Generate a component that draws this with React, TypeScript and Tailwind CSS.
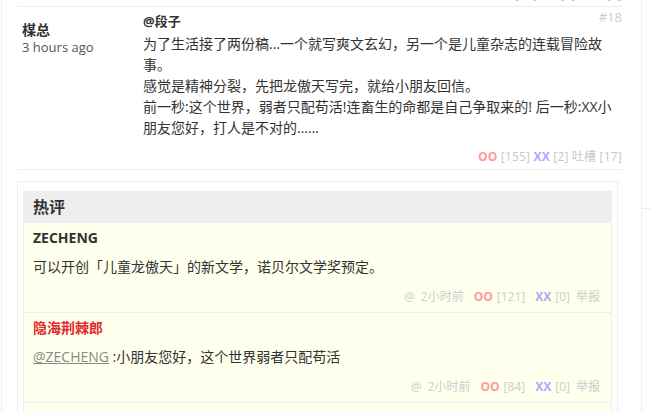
import React from "react";

interface HotComment {
  author: string;
  authorColor: string;
  mention?: string;
  text: string;
  time: string;
  oo: number;
  xx: number;
}

const hotComments: HotComment[] = [
  {
    author: "ZECHENG",
    authorColor: "text-[#333]",
    text: "可以开创「儿童龙傲天」的新文学，诺贝尔文学奖预定。",
    time: "2小时前",
    oo: 121,
    xx: 0,
  },
  {
    author: "隐海荆棘郎",
    authorColor: "text-[#e02c2c]",
    mention: "@ZECHENG",
    text: " :小朋友您好，这个世界弱者只配苟活",
    time: "2小时前",
    oo: 84,
    xx: 0,
  },
  {
    author: "",
    authorColor: "text-[#333]",
    text: "",
    time: "",
    oo: 0,
    xx: 0,
  },
];

const VoteLine = ({ oo, xx, tucao }: { oo: number; xx: number; tucao: number }) => (
  <div className="text-right text-[12px] leading-[18px] tracking-[0.2px] text-[#c8c8c8]">
    <span className="font-bold text-[#ff9a9a]">OO</span> [{oo}]{" "}
    <span className="font-bold text-[#a9a9ff]">XX</span> [{xx}] 吐槽 [{tucao}]
  </div>
);

export default function App() {
  return (
    <div
      className="w-[651px] h-[412px] overflow-hidden bg-white flex text-[#333]"
      style={{ fontFamily: '"Open Sans", "Noto Sans CJK SC", sans-serif' }}
    >
      {/* main column */}
      <div className="ml-px w-[641px] shrink-0 border-x border-[#eee] pl-[15px] pr-[18px]">
        {/* previous comment, cut off */}
        <div className="-mt-[14px] pb-[2px] border-b border-[#eee] pr-[1px]">
          <VoteLine oo={42} xx={3} tucao={6} />
        </div>

        {/* comment #18 */}
        <div className="relative flex border-b border-[#eee] pl-[5px] pb-[3px]">
          <div className="w-[121px] shrink-0 pt-[14px]">
            <div className="text-[14px] font-bold leading-[18px]">楳总</div>
            <div className="text-[13px] leading-[16px] text-[#555]">3 hours ago</div>
          </div>
          <div className="flex-1 pt-[5px] pr-[1px]">
            <div className="text-[13px] font-bold leading-[18px]">@段子</div>
            <div className="mt-[3px] text-[14px] leading-[21px] whitespace-nowrap">
              为了生活接了两份稿...一个就写爽文玄幻，另一个是儿童杂志的连载冒险故
              <br />
              事。
              <br />
              感觉是精神分裂，先把龙傲天写完，就给小朋友回信。
              <br />
              前一秒:这个世界，弱者只配苟活!连畜生的命都是自己争取来的! 后一秒:XX小
              <br />
              朋友您好，打人是不对的……
            </div>
            <div className="mt-[10px]">
              <VoteLine oo={155} xx={2} tucao={17} />
            </div>
          </div>
          <div className="absolute top-[2px] right-[1px] text-[13px] leading-[16px] text-[#ccc]">
            #18
          </div>
        </div>

        {/* hot comments */}
        <div className="mt-[11px] mr-[5px] border border-[#eee] pt-[9px] px-[5px]">
          <div className="h-[32px] bg-[#eee] pl-[10px] flex items-center text-[16px] font-bold text-[#333]">
            热评
          </div>
          {hotComments.map((c, i) => (
            <div
              key={i}
              className="bg-[#ffffee] border-x border-b border-[#eee] pl-[9px] pr-[11px] pt-[6px] pb-[6px]"
            >
              <div className={`text-[14px] font-bold leading-[18px] h-[18px] ${c.authorColor}`}>
                {c.author}
              </div>
              <div className="mt-[10px] text-[14px] leading-[20px] h-[20px]">
                {c.mention && (
                  <span className="text-[#888] underline underline-offset-1">{c.mention}</span>
                )}
                {c.text}
              </div>
              <div className="mt-[11px] h-[18px] flex justify-end items-center text-[12px] leading-[18px] text-[#ccc]">
                {c.time && (
                  <>
                    <span>@</span>
                    <span className="ml-[6px]">{c.time}</span>
                    <span className="ml-[10px] font-bold text-[#ff9a9a]">OO</span>
                    <span className="ml-[4px]">[{c.oo}]</span>
                    <span className="ml-[10px] font-bold text-[#a9a9ff]">XX</span>
                    <span className="ml-[4px]">[{c.xx}]</span>
                    <span className="ml-[6px]">举报</span>
                  </>
                )}
              </div>
            </div>
          ))}
        </div>
      </div>

      {/* sidebar */}
      <div className="flex-1">
        <div className="h-[209px] border-b border-[#eee]" />
      </div>
    </div>
  );
}
